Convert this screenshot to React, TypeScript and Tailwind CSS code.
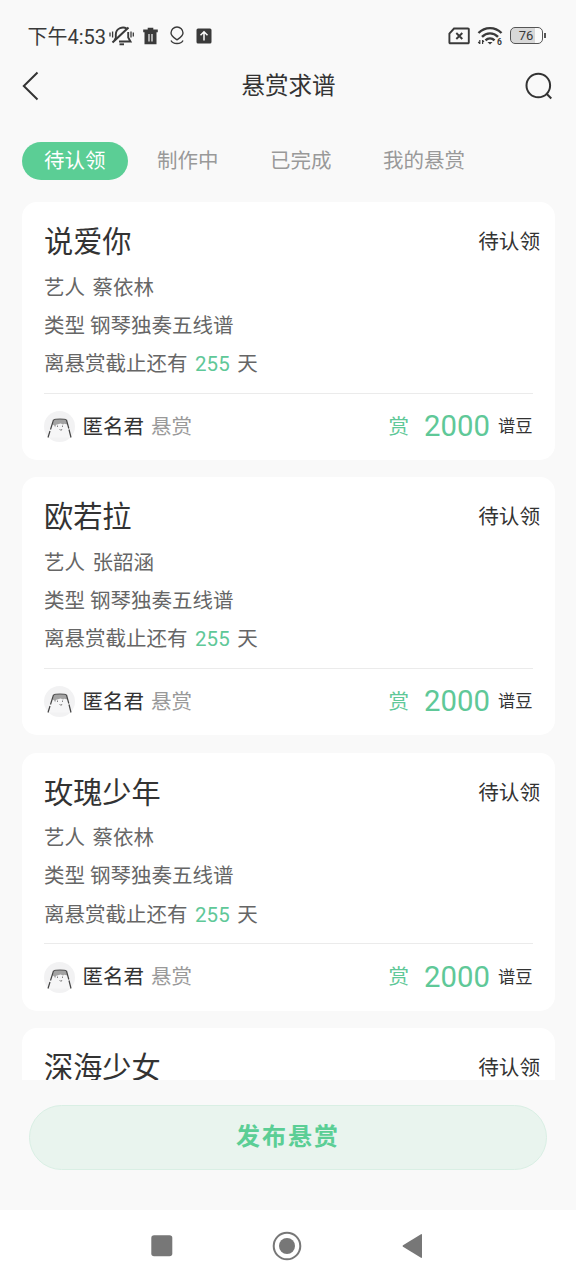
import clsx from "clsx";

interface Bounty {
  title: string;
  artist: string;
  type: string;
  days: number;
  user: string;
  price: number;
}

const tabs = ["待认领", "制作中", "已完成", "我的悬赏"];

const bounties: Bounty[] = [
  { title: "说爱你", artist: "蔡依林", type: "钢琴独奏五线谱", days: 255, user: "匿名君", price: 2000 },
  { title: "欧若拉", artist: "张韶涵", type: "钢琴独奏五线谱", days: 255, user: "匿名君", price: 2000 },
  { title: "玫瑰少年", artist: "蔡依林", type: "钢琴独奏五线谱", days: 255, user: "匿名君", price: 2000 },
];

const StatusBar = () => (
  <div className="flex h-[56px] shrink-0 items-center pt-[15px] pr-[30.500px] pl-[27.500px] text-[#3a3a3a]">
    <span className="w-[82px] pt-[2px] text-[20px] leading-[24px] whitespace-nowrap">下午4:53</span>

    {/* Muted bell */}
    <svg className="-ml-px h-[22px] w-[26px]" viewBox="0 0 26 22" fill="none" stroke="currentColor" strokeWidth="1.900">
      <path d="M17.500 3.600C14.500 1.500 7 2.500 6.800 9.500V13L5.500 15" />
      <path d="M19.200 7V12.500L21.500 16.500H10" />
      <path d="M19.500 2.500L3.500 17.500" strokeWidth="2.100" />
      <path d="M10.500 19.300h4.500" />
      <path d="M1 7.500v4M3.600 6.500v6M22 6.500v6M24.300 7.500v4" strokeWidth="1.300" />
    </svg>

    {/* Trash */}
    <svg className="ml-[7px] h-[18px] w-[17px]" viewBox="0 0 16 18" fill="currentColor">
      <path fillRule="evenodd" d="M5.200 .8h5.600v1.800H15.300v2.600h-1.300V17.300H2V5.200H.7V2.600h4.500zM5.900 7v7.500h1.200V7zm3 0v7.500h1.200V7z" />
    </svg>

    {/* Location */}
    <svg className="ml-[10px] h-[19px] w-[16px]" viewBox="0 0 16 19" fill="none" stroke="currentColor" strokeWidth="1.400">
      <path d="M8 13.800C5.500 12 2 10 2 7a6 6 0 0 1 12 0c0 3-3.500 5-6 6.800z" />
      <path d="M2 14.500C4 18.500 12 18.500 14 14.500" />
    </svg>

    {/* Upload */}
    <svg className="ml-[11px] h-[16px] w-[16px]" viewBox="0 0 16 16">
      <rect x="0.500" y="0.500" width="15" height="15" rx="1.500" fill="currentColor" />
      <path d="M8 12.500V4M4.500 7.200L8 3.700l3.500 3.500" fill="none" stroke="#fafafa" strokeWidth="1.500" />
    </svg>

    {/* No SIM */}
    <svg className="ml-auto h-[18px] w-[22px]" viewBox="0 0 22 18" fill="none" stroke="currentColor" strokeWidth="1.900">
      <path d="M6 1.500H20a.8.8 0 0 1 .8.8v13.200a.8.8 0 0 1-.8.8H2.200a.8.8 0 0 1-.8-.8V6.500z" />
      <path d="M8.300 6l6 6M14.300 6l-6 6" />
    </svg>

    {/* Wifi 6 */}
    <svg className="ml-[7px] h-[20px] w-[26px]" viewBox="0 0 26 20" fill="none" stroke="currentColor" strokeWidth="2.400">
      <path d="M1.500 7C8 .5 18 .5 24.500 7" />
      <path d="M5 10.800c4.500-4.600 11.500-4.600 16 0" />
      <path d="M8.500 14.300c2.500-2.600 6.500-2.600 9 0" />
      <path d="M10.500 16h5L13 18.600z" fill="currentColor" stroke="none" />
      <path d="M2.800 14v4M2.800 17.500L1.200 16M5.600 18v-4M5.600 14.300L7 15.800" strokeWidth="1.200" />
      <text x="20" y="19" fontSize="8.500" fontWeight="700" fontFamily="Roboto, sans-serif" fill="currentColor" stroke="none">6</text>
    </svg>

    {/* Battery */}
    <div className="ml-[7px] flex items-center">
      <div className="flex h-[17px] w-[33px] items-center justify-center rounded-[5px] border-[1.500px] border-[#555] bg-linear-to-r from-[#d8d8d8] from-76% to-[#fafafa] to-76% text-[13px] leading-none">
        76
      </div>
      <div className="ml-px h-[5px] w-[2px] bg-[#555]" />
    </div>
  </div>
);

const Header = () => (
  <header className="flex h-[60px] shrink-0 items-center justify-between pr-[24px] pl-[22px] text-[#333]">
    <svg className="h-[30px] w-[28px]" viewBox="0 0 28 30" fill="none" stroke="currentColor" strokeWidth="2">
      <path d="M15.500 1.500L1.800 15l13.700 13.500" />
    </svg>
    <h1 className="pl-[3px] text-[23.500px] leading-[34px]">悬赏求谱</h1>
    <svg className="h-[30px] w-[28px]" viewBox="0 0 28 30" fill="none" stroke="currentColor" strokeWidth="2">
      <circle cx="14.300" cy="14.500" r="11.800" />
      <path d="M22.300 22.500l5 5" />
    </svg>
  </header>
);

const Tabs = () => (
  <nav className="flex h-[86px] shrink-0 items-center gap-[7.500px] pt-[3px] pl-[22px] text-[20.500px]">
    {tabs.map((tab, i) => (
      <button
        key={tab}
        className={clsx(
          "h-[38px] rounded-full px-[22px] pt-px leading-[37px] whitespace-nowrap",
          i === 0 ? "bg-[#5bce95] text-white" : "text-[#999]",
        )}
      >
        {tab}
      </button>
    ))}
  </nav>
);

const Avatar = () => (
  <svg className="h-[31px] w-[31px]" viewBox="0 0 31 31">
    <circle cx="15.500" cy="15.500" r="15.500" fill="#f2f2f3" />
    <path d="M4 26.500L9 9h13.500L27 26.500" fill="#f6f6f7" />
    <path d="M8.500 13.500L10 9c2-1.500 10-1.500 12.500 0l.8 4.500-3-.8-1.200.8-2.500-1-2.500.8-2 .5-1 2.500-1-2z" fill="#a3a3a3" />
    <path d="M9.500 9c2-1.300 11-1.300 13 0" fill="none" stroke="#555" strokeWidth="1.100" />
    <path d="M4 26.500l2-6.500M6.500 18.500l3-9.500M22.500 9l2.300 8.500M25 18.500l2 8" fill="none" stroke="#444" strokeWidth="1.200" />
    <path d="M13.500 14.500V16M18.500 14.500V16M15.500 18l1.500 1.500 1-1.500" fill="none" stroke="#777" strokeWidth="0.900" />
  </svg>
);

const CardHeading = ({ title }: { title: string }) => (
  <div className="flex h-[39px] items-center justify-between pr-[14.500px] text-[#333]">
    <h2 className="text-[29.200px] leading-[39px]">{title}</h2>
    <span className="text-[20.600px]">待认领</span>
  </div>
);

const BountyCard = ({ bounty }: { bounty: Bounty }) => (
  <article className="h-[258px] shrink-0 rounded-[15px] bg-white pt-[21px] pl-[22px] text-[#666]">
    <CardHeading title={bounty.title} />
    <div className="mt-[6.500px] text-[20.500px] leading-[38.200px]">
      <p>
        艺人<span className="ml-[7.500px]">{bounty.artist}</span>
      </p>
      <p>类型 {bounty.type}</p>
      <p>
        离悬赏截止还有 <span className="mx-[2.500px] text-[#5fc898]">{bounty.days}</span> 天
      </p>
    </div>
    <div className="mt-[9.500px] mr-[22px] border-t-[1.500px] border-[#ebebeb]" />
    <div className="mr-[22px] flex h-[66px] items-center text-[20.500px]">
      <Avatar />
      <span className="ml-[7.500px] pt-px text-[#333]">{bounty.user}</span>
      <span className="ml-[7px] pt-px text-[#999]">悬赏</span>
      <span className="ml-auto pt-px text-[#5fc898]">赏</span>
      <span className="ml-[15px] pt-px text-[29.300px] text-[#5fc898]">{bounty.price}</span>
      <span className="ml-[8px] pt-px text-[17.300px] text-[#333]">谱豆</span>
    </div>
  </article>
);

const NavigationBar = () => (
  <div className="flex h-[70px] shrink-0 items-center justify-center gap-[99px] bg-white pt-px pr-[2px] text-[#777]">
    <svg className="h-[22px] w-[22px]" viewBox="0 0 22 22" fill="currentColor">
      <rect x="0.300" y="0.300" width="21" height="21" rx="2.800" />
    </svg>
    <svg className="h-[30px] w-[30px]" viewBox="0 0 30 30">
      <circle cx="15" cy="15" r="13.300" fill="none" stroke="currentColor" strokeWidth="2" />
      <circle cx="15" cy="15" r="8" fill="currentColor" />
    </svg>
    <svg className="h-[26px] w-[22px]" viewBox="0 0 22 26" fill="currentColor">
      <path d="M20 1.200Q21 .8 21 2v22q0 1.200-1 .8L2 13.800q-1-.8 0-1.600z" />
    </svg>
  </div>
);

const App = () => {
  return (
    <div className="flex h-[1280px] w-[576px] flex-col overflow-hidden bg-[#f9f9f9] font-[Roboto,'Noto_Sans_CJK_SC',sans-serif]">
      <StatusBar />
      <Header />
      <Tabs />

      {/* Bounty list */}
      <main className="flex h-[878px] shrink-0 flex-col gap-[17.330px] overflow-hidden pr-[21.500px] pl-[22px]">
        {bounties.map((bounty) => (
          <BountyCard key={bounty.title} bounty={bounty} />
        ))}

        {/* Next card, scrolled partly out of view */}
        <article className="flex-1 rounded-t-[15px] bg-white pt-[21px] pl-[22px]">
          <CardHeading title="深海少女" />
        </article>
      </main>

      <div className="flex-1 px-[29px] pt-[25px]">
        <button className="h-[65px] w-full rounded-full border border-[#d9efe4] bg-[#e9f4ee] text-[24px] leading-[61px] font-bold tracking-[2px] text-[#5bce95]">
          发布悬赏
        </button>
      </div>
      <NavigationBar />
    </div>
  );
};

export default App;
